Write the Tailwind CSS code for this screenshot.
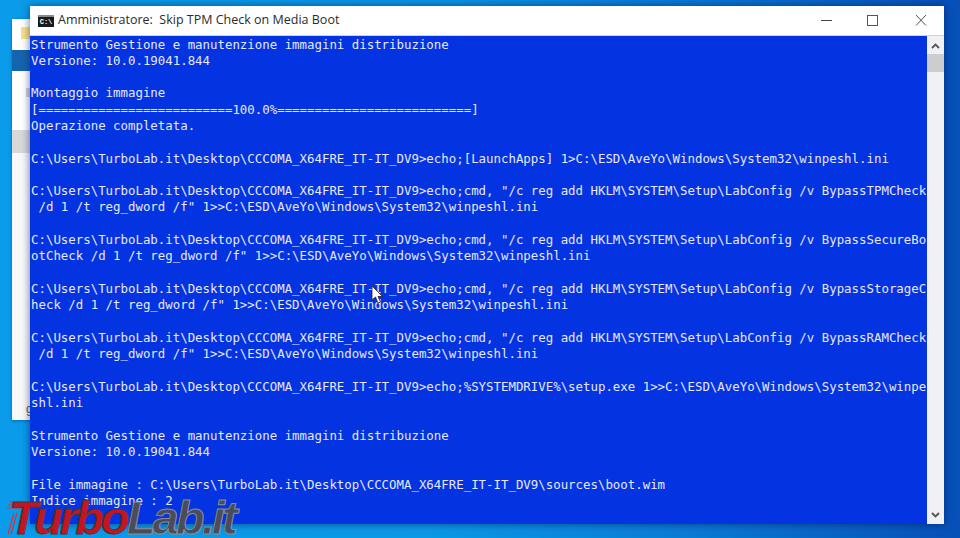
<!DOCTYPE html>
<html lang="en">
  <head>
    <meta charset="UTF-8" />
    <script src="https://cdn.jsdelivr.net/npm/@tailwindcss/browser@4"></script>
    <title>Skip TPM Check on Media Boot</title>
  </head>
  <body class="m-0 overflow-hidden">
    <!-- desktop -->
    <div class="relative w-[960px] h-[538px] overflow-hidden bg-[linear-gradient(90deg,#0a9cea_0%,#0a98e8_45%,#0a7ad6_72%,#0650b8_100%)]">

      <!-- explorer window behind the console -->
      <div class="absolute left-[12px] top-[19px] w-[30px] h-[401px] bg-[#f6f6f6] flex flex-col shadow-[0_1px_3px_rgba(0,30,80,0.4)]">
        <div class="h-[31px] shrink-0 bg-white pl-[9px] pt-[8px]">
          <div class="w-[9px] h-[12px] bg-[#f5e08a]"></div>
        </div>
        <div class="h-[21px] shrink-0 bg-[#1565ae]"></div>
        <div class="h-[59px] shrink-0 bg-white pl-[14px] pt-[17px]">
          <div class="w-[5px] h-[9px] bg-[#d4d4d4]"></div>
        </div>
        <div class="h-[23px] shrink-0 bg-[#d8d8d8]"></div>
        <div class="flex-1 bg-[#f8f8f8] flex items-end pl-[14px] pb-[4px]">
          <span class="font-['Liberation_Sans',sans-serif] text-[12px] leading-[14px] text-[#555]">g</span>
        </div>
      </div>

      <!-- console window -->
      <div class="absolute left-[30px] top-[6px] w-[914px] h-[518px] flex flex-col bg-white shadow-[0_0_8px_rgba(0,20,80,0.6)]">
        <div class="h-[30px] shrink-0 flex items-center bg-white border-b border-[#c9d3e6]">
          <div class="ml-[8px] w-[16px] h-[12px] bg-[#1a1a1a] border-t-2 border-[#8a8a8a] flex items-center justify-center">
            <span class="font-['Liberation_Mono',monospace] font-bold text-[7px] leading-[8px] text-white">C:\</span>
          </div>
          <span class="ml-[4px] font-['Open_Sans','Noto_Sans',sans-serif] text-[12.5px] text-[#2b2b2b] whitespace-pre">Amministratore:  Skip TPM Check on Media Boot</span>
          <div class="ml-auto flex items-center h-full">
            <svg class="w-[46px] h-[30px]" viewBox="0 0 46 30" fill="none" stroke="#444" stroke-width="1"><path d="M15 14.5H26" /></svg>
            <svg class="w-[46px] h-[30px]" viewBox="0 0 46 30" fill="none" stroke="#555" stroke-width="1"><rect x="15.5" y="9.5" width="10" height="10" /></svg>
            <svg class="w-[46px] h-[30px]" viewBox="0 0 46 30" fill="none" stroke="#555" stroke-width="1"><path d="M18 9L28 19.5M28 9L18 19.5" /></svg>
          </div>
        </div>
        <div class="flex flex-1 min-h-0">
          <pre class="flex-1 min-w-0 overflow-hidden m-0 pl-[1px] pt-[0.5px] bg-[#0433e2] text-[#e6e9f5] font-['DejaVu_Sans_Mono',monospace] text-[12.4px] leading-[16.3px]">Strumento Gestione e manutenzione immagini distribuzione
Versione: 10.0.19041.844

Montaggio immagine
[==========================100.0%==========================]
Operazione completata.

C:\Users\TurboLab.it\Desktop\CCCOMA_X64FRE_IT-IT_DV9>echo;[LaunchApps] 1>C:\ESD\AveYo\Windows\System32\winpeshl.ini

C:\Users\TurboLab.it\Desktop\CCCOMA_X64FRE_IT-IT_DV9>echo;cmd, "/c reg add HKLM\SYSTEM\Setup\LabConfig /v BypassTPMCheck
 /d 1 /t reg_dword /f" 1>>C:\ESD\AveYo\Windows\System32\winpeshl.ini

C:\Users\TurboLab.it\Desktop\CCCOMA_X64FRE_IT-IT_DV9>echo;cmd, "/c reg add HKLM\SYSTEM\Setup\LabConfig /v BypassSecureBo
otCheck /d 1 /t reg_dword /f" 1>>C:\ESD\AveYo\Windows\System32\winpeshl.ini

C:\Users\TurboLab.it\Desktop\CCCOMA_X64FRE_IT-IT_DV9>echo;cmd, "/c reg add HKLM\SYSTEM\Setup\LabConfig /v BypassStorageC
heck /d 1 /t reg_dword /f" 1>>C:\ESD\AveYo\Windows\System32\winpeshl.ini

C:\Users\TurboLab.it\Desktop\CCCOMA_X64FRE_IT-IT_DV9>echo;cmd, "/c reg add HKLM\SYSTEM\Setup\LabConfig /v BypassRAMCheck
 /d 1 /t reg_dword /f" 1>>C:\ESD\AveYo\Windows\System32\winpeshl.ini

C:\Users\TurboLab.it\Desktop\CCCOMA_X64FRE_IT-IT_DV9>echo;%SYSTEMDRIVE%\setup.exe 1>>C:\ESD\AveYo\Windows\System32\winpe
shl.ini

Strumento Gestione e manutenzione immagini distribuzione
Versione: 10.0.19041.844

File immagine : C:\Users\TurboLab.it\Desktop\CCCOMA_X64FRE_IT-IT_DV9\sources\boot.wim
Indice immagine : 2</pre>
          <!-- scrollbar -->
          <div class="w-[17px] shrink-0 bg-[#f0f0f5] flex flex-col justify-between">
            <div>
              <svg class="w-[17px] h-[18px]" viewBox="0 0 17 18" fill="none" stroke="#555" stroke-width="1.8"><path d="M5 12L8.5 8.5L12 12" /></svg>
              <div class="h-[18px] bg-[#cdcdcd]"></div>
            </div>
            <svg class="w-[17px] h-[18px]" viewBox="0 0 17 18" fill="none" stroke="#555" stroke-width="1.8"><path d="M5 7L8.5 10.5L12 7" /></svg>
          </div>
        </div>
      </div>

      <!-- mouse pointer -->
      <svg class="absolute left-[371px] top-[285px] w-[13px] h-[19px]" viewBox="0 0 13 19"><path d="M1 1V15L4.5 12L7 18L9.5 17L7 11.5H11.5Z" fill="#fff" stroke="#222" stroke-width="0.8" /></svg>

      <!-- watermark -->
      <svg class="absolute left-[4px] top-[501px] w-[22px] h-[34px]" viewBox="0 0 22 34" fill="none" stroke="#d8303a" stroke-width="1.2"><path d="M6 1H22M4 4H20M3 7H18M10 12L4 33M13 12L7 33" /></svg>
      <div class="absolute left-[9px] top-[497px] font-['Liberation_Sans',sans-serif] font-bold italic text-[47px] leading-[41px] tracking-[-2.9px] whitespace-nowrap [-webkit-text-stroke:1px_#3a3a44]">
        <span class="text-[#c8141e]">Turbo</span><span class="text-[#4a4c58] [-webkit-text-stroke:1px_#8a8c96]">Lab.it</span>
      </div>
    </div>
  </body>
</html>
